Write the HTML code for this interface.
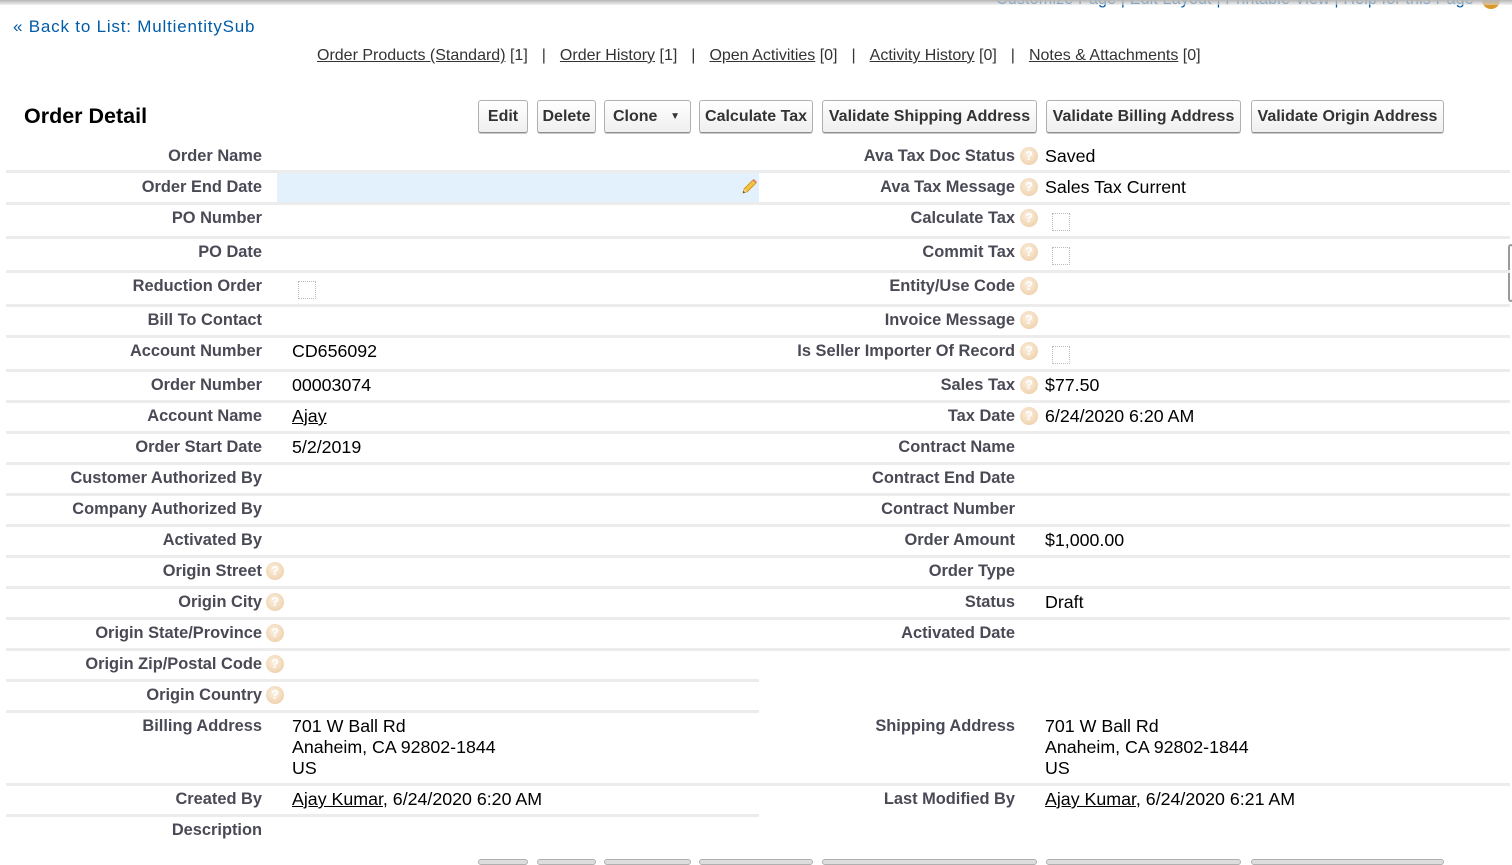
<!DOCTYPE html>
<html><head><meta charset="utf-8"><style>
*{margin:0;padding:0;box-sizing:border-box}
body{width:1512px;height:862px;overflow:hidden;background:#fff;font-family:"Liberation Sans",Arial,sans-serif;position:relative;color:#000}
.a{position:absolute;white-space:nowrap}
.topbar{position:absolute;left:0;top:0;width:1512px;height:5px;background:linear-gradient(#b5b5b5,rgba(230,230,230,.5))}
.toplinks{position:absolute;left:996px;top:-10px;font-size:16.2px;color:#015ba7;letter-spacing:.1px}
.back{left:13px;top:17px;font-size:17px;color:#015ba7;letter-spacing:.8px}
.rl{top:47px;font-size:16px;color:#333}
.rl u{text-decoration:underline}
.rl .s{color:#333;margin:0 14px}
.title{left:24px;top:104px;font-size:21.5px;font-weight:bold;color:#000}
.btn{position:absolute;top:100px;height:33px;border:1px solid #b0b0b0;border-bottom-color:#8f8f8f;border-radius:3px;background:linear-gradient(#fff,#efefef);font-weight:bold;font-size:16px;color:#333;text-align:center;line-height:31px;box-shadow:0 1px 0 #c8c8c8}
.bb{position:absolute;top:859px;height:6px;border:1px solid #b0b0b0;border-radius:3px;background:#ddd}
.lab{position:absolute;text-align:right;font-weight:bold;font-size:16.4px;color:#4a4a56;line-height:20px;margin-top:1px}
.val{position:absolute;font-size:17.8px;line-height:21px;color:#000;margin-top:1px}
.val u{text-decoration:underline}
.ln{position:absolute;height:3px;background:#ececec}
.hp{position:absolute;width:18px;height:18px;border-radius:50%;background:radial-gradient(circle at 45% 40%,#fbf1e4,#f0d4b0 70%,#e8c59c);color:#fff;font-size:13px;font-weight:bold;text-align:center;line-height:18px}
.cb{position:absolute;width:18px;height:18px;border:1px dotted #bbb}
</style></head><body>
<div class="toplinks">Customize Page | Edit Layout | Printable View | Help for this Page</div>
<div class="a" style="left:1482px;top:-9px;width:18px;height:18px;border-radius:50%;background:#d99a2b"></div>
<div class="topbar"></div>
<div class="a back">« Back to List: MultientitySub</div>
<div class="a rl" style="left:317px"><u>Order Products (Standard)</u> [1]<span class="s">|</span><u>Order History</u> [1]<span class="s">|</span><u>Open Activities</u> [0]<span class="s">|</span><u>Activity History</u> [0]<span class="s">|</span><u>Notes &amp; Attachments</u> [0]</div>
<div class="a title">Order Detail</div>
<div class="btn" style="left:478px;width:50px">Edit</div>
<div class="btn" style="left:537px;width:59px">Delete</div>
<div class="btn" style="left:604px;width:87px;text-align:left;padding-left:8px">Clone <span style="font-size:10px;position:absolute;right:10px;top:0">▼</span></div>
<div class="btn" style="left:699px;width:114px">Calculate Tax</div>
<div class="btn" style="left:822px;width:215px">Validate Shipping Address</div>
<div class="btn" style="left:1046px;width:195px">Validate Billing Address</div>
<div class="btn" style="left:1251px;width:193px">Validate Origin Address</div>
<div class="bb" style="left:478px;width:50px"></div><div class="bb" style="left:537px;width:59px"></div><div class="bb" style="left:604px;width:87px"></div><div class="bb" style="left:699px;width:114px"></div><div class="bb" style="left:822px;width:215px"></div><div class="bb" style="left:1046px;width:195px"></div><div class="bb" style="left:1251px;width:193px"></div>
<div class="a" style="left:1508px;top:244px;width:6px;height:58px;border:2px solid #9a9a9a;border-radius:4px"></div>

<div class="a" style="left:277px;top:173px;width:482px;height:29px;background:#e3f1fd"></div>
<svg class="a" style="left:740px;top:178px" width="18" height="18" viewBox="0 0 18 18"><path d="M3 15 L4 11 L13 2 L16 5 L7 14 Z" fill="#f5c242" stroke="#c88a1a" stroke-width=".8"/><path d="M13 2 L16 5 L17 4 L14 1Z" fill="#e07a9a"/><path d="M3 15 L4 11 L7 14Z" fill="#f1d7a8"/><path d="M3 15 L3.6 13 L5 14.4Z" fill="#222"/></svg>

<!-- LEFT -->
<div class="lab" style="left:0;width:262px;top:145px">Order Name</div>
<div class="lab" style="left:0;width:262px;top:176px">Order End Date</div>
<div class="lab" style="left:0;width:262px;top:207px">PO Number</div>
<div class="lab" style="left:0;width:262px;top:241px">PO Date</div>
<div class="lab" style="left:0;width:262px;top:275px">Reduction Order</div>
<div class="cb" style="left:298px;top:281px"></div>
<div class="lab" style="left:0;width:262px;top:309px">Bill To Contact</div>
<div class="lab" style="left:0;width:262px;top:340px">Account Number</div><div class="val" style="left:292px;top:340px">CD656092</div>
<div class="lab" style="left:0;width:262px;top:374px">Order Number</div><div class="val" style="left:292px;top:374px">00003074</div>
<div class="lab" style="left:0;width:262px;top:405px">Account Name</div><div class="val" style="left:292px;top:405px"><u>Ajay</u></div>
<div class="lab" style="left:0;width:262px;top:436px">Order Start Date</div><div class="val" style="left:292px;top:436px">5/2/2019</div>
<div class="lab" style="left:0;width:262px;top:467px">Customer Authorized By</div>
<div class="lab" style="left:0;width:262px;top:498px">Company Authorized By</div>
<div class="lab" style="left:0;width:262px;top:529px">Activated By</div>
<div class="lab" style="left:0;width:262px;top:560px">Origin Street</div><div class="hp" style="left:266px;top:562px">?</div>
<div class="lab" style="left:0;width:262px;top:591px">Origin City</div><div class="hp" style="left:266px;top:593px">?</div>
<div class="lab" style="left:0;width:262px;top:622px">Origin State/Province</div><div class="hp" style="left:266px;top:624px">?</div>
<div class="lab" style="left:0;width:262px;top:653px">Origin Zip/Postal Code</div><div class="hp" style="left:266px;top:655px">?</div>
<div class="lab" style="left:0;width:262px;top:684px">Origin Country</div><div class="hp" style="left:266px;top:686px">?</div>
<div class="lab" style="left:0;width:262px;top:715px">Billing Address</div><div class="val" style="left:292px;top:715px">701 W Ball Rd<br>Anaheim, CA 92802-1844<br>US</div>
<div class="lab" style="left:0;width:262px;top:788px">Created By</div><div class="val" style="left:292px;top:788px"><u>Ajay Kumar</u>, 6/24/2020 6:20 AM</div>
<div class="lab" style="left:0;width:262px;top:819px">Description</div>

<!-- RIGHT -->
<div class="lab" style="left:700px;width:315px;top:145px">Ava Tax Doc Status</div><div class="hp" style="left:1020px;top:147px">?</div><div class="val" style="left:1045px;top:145px">Saved</div>
<div class="lab" style="left:700px;width:315px;top:176px">Ava Tax Message</div><div class="hp" style="left:1020px;top:178px">?</div><div class="val" style="left:1045px;top:176px">Sales Tax Current</div>
<div class="lab" style="left:700px;width:315px;top:207px">Calculate Tax</div><div class="hp" style="left:1020px;top:209px">?</div><div class="cb" style="left:1052px;top:213px"></div>
<div class="lab" style="left:700px;width:315px;top:241px">Commit Tax</div><div class="hp" style="left:1020px;top:243px">?</div><div class="cb" style="left:1052px;top:247px"></div>
<div class="lab" style="left:700px;width:315px;top:275px">Entity/Use Code</div><div class="hp" style="left:1020px;top:277px">?</div>
<div class="lab" style="left:700px;width:315px;top:309px">Invoice Message</div><div class="hp" style="left:1020px;top:311px">?</div>
<div class="lab" style="left:700px;width:315px;top:340px">Is Seller Importer Of Record</div><div class="hp" style="left:1020px;top:342px">?</div><div class="cb" style="left:1052px;top:346px"></div>
<div class="lab" style="left:700px;width:315px;top:374px">Sales Tax</div><div class="hp" style="left:1020px;top:376px">?</div><div class="val" style="left:1045px;top:374px">$77.50</div>
<div class="lab" style="left:700px;width:315px;top:405px">Tax Date</div><div class="hp" style="left:1020px;top:407px">?</div><div class="val" style="left:1045px;top:405px">6/24/2020 6:20 AM</div>
<div class="lab" style="left:700px;width:315px;top:436px">Contract Name</div>
<div class="lab" style="left:700px;width:315px;top:467px">Contract End Date</div>
<div class="lab" style="left:700px;width:315px;top:498px">Contract Number</div>
<div class="lab" style="left:700px;width:315px;top:529px">Order Amount</div><div class="val" style="left:1045px;top:529px">$1,000.00</div>
<div class="lab" style="left:700px;width:315px;top:560px">Order Type</div>
<div class="lab" style="left:700px;width:315px;top:591px">Status</div><div class="val" style="left:1045px;top:591px">Draft</div>
<div class="lab" style="left:700px;width:315px;top:622px">Activated Date</div>
<div class="lab" style="left:700px;width:315px;top:715px">Shipping Address</div><div class="val" style="left:1045px;top:715px">701 W Ball Rd<br>Anaheim, CA 92802-1844<br>US</div>
<div class="lab" style="left:700px;width:315px;top:788px">Last Modified By</div><div class="val" style="left:1045px;top:788px"><u>Ajay Kumar</u>, 6/24/2020 6:21 AM</div>

<!-- lines -->
<div class="ln" style="left:6px;width:753px;top:170px"></div>
<div class="ln" style="left:6px;width:753px;top:202px"></div>
<div class="ln" style="left:6px;width:753px;top:236px"></div>
<div class="ln" style="left:6px;width:753px;top:270px"></div>
<div class="ln" style="left:6px;width:753px;top:304px"></div>
<div class="ln" style="left:6px;width:753px;top:335px"></div>
<div class="ln" style="left:6px;width:753px;top:369px"></div>
<div class="ln" style="left:6px;width:753px;top:400px"></div>
<div class="ln" style="left:6px;width:753px;top:431px"></div>
<div class="ln" style="left:6px;width:753px;top:462px"></div>
<div class="ln" style="left:6px;width:753px;top:493px"></div>
<div class="ln" style="left:6px;width:753px;top:524px"></div>
<div class="ln" style="left:6px;width:753px;top:555px"></div>
<div class="ln" style="left:6px;width:753px;top:586px"></div>
<div class="ln" style="left:6px;width:753px;top:617px"></div>
<div class="ln" style="left:6px;width:753px;top:648px"></div>
<div class="ln" style="left:6px;width:753px;top:679px"></div>
<div class="ln" style="left:6px;width:753px;top:710px"></div>
<div class="ln" style="left:6px;width:753px;top:783px"></div>
<div class="ln" style="left:6px;width:753px;top:814px"></div>

<div class="ln" style="left:759px;width:751px;top:170px"></div>
<div class="ln" style="left:759px;width:751px;top:202px"></div>
<div class="ln" style="left:759px;width:751px;top:236px"></div>
<div class="ln" style="left:759px;width:751px;top:270px"></div>
<div class="ln" style="left:759px;width:751px;top:304px"></div>
<div class="ln" style="left:759px;width:751px;top:335px"></div>
<div class="ln" style="left:759px;width:751px;top:369px"></div>
<div class="ln" style="left:759px;width:751px;top:400px"></div>
<div class="ln" style="left:759px;width:751px;top:431px"></div>
<div class="ln" style="left:759px;width:751px;top:462px"></div>
<div class="ln" style="left:759px;width:751px;top:493px"></div>
<div class="ln" style="left:759px;width:751px;top:524px"></div>
<div class="ln" style="left:759px;width:751px;top:555px"></div>
<div class="ln" style="left:759px;width:751px;top:586px"></div>
<div class="ln" style="left:759px;width:751px;top:617px"></div>
<div class="ln" style="left:759px;width:751px;top:648px"></div>
<div class="ln" style="left:759px;width:751px;top:783px"></div>
</body></html>
